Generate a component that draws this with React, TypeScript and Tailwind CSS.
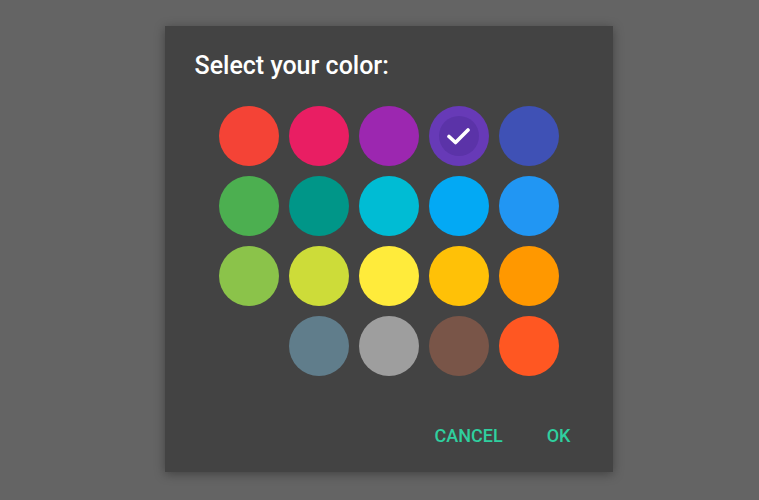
const swatches: (string | null)[] = [
  '#f44336', '#e91e63', '#9c27b0', '#673ab7', '#3f51b5',
  '#4caf50', '#009688', '#00bcd4', '#03a9f4', '#2196f3',
  '#8bc34a', '#cddc39', '#ffeb3b', '#ffc107', '#ff9800',
  null, '#607d8b', '#9e9e9e', '#795548', '#ff5722',
]

const selected = '#673ab7'

function Swatch({ color }: { color: string | null }) {
  if (!color) return <div className="h-[60px] w-[60px]" />
  const isSelected = color === selected
  return (
    <button
      type="button"
      className="flex h-[60px] w-[60px] items-center justify-center rounded-full"
      style={{ backgroundColor: color }}
    >
      {isSelected && (
        <span className="flex h-[40px] w-[40px] items-center justify-center rounded-full bg-[#5b33a8]">
          <svg width="24" height="24" viewBox="0 0 24 24" fill="none">
            <polyline
              points="2,12.5 8.5,18.5 21,6"
              stroke="white"
              strokeWidth="3.6"
              strokeLinecap="round"
              strokeLinejoin="round"
            />
          </svg>
        </span>
      )}
    </button>
  )
}

export default function App() {
  return (
    <div className="flex h-[500px] w-[759px] items-start justify-center bg-[#646464] pt-[26px] font-['Roboto',sans-serif]">
      <div className="ml-[18px] flex h-[446px] w-[448px] flex-col bg-[#434343] shadow-[0_2px_10px_rgba(0,0,0,0.35)]">
        <h2 className="pl-[30px] pt-[25px] text-[25px] font-medium leading-[30px] text-white">
          Select your color:
        </h2>
        <div className="mx-auto mt-[25px] grid grid-cols-5 gap-[10px]">
          {swatches.map((c, i) => (
            <Swatch key={i} color={c} />
          ))}
        </div>
        <div className="mt-[50px] flex justify-end gap-[44px] pr-[42px]">
          <button type="button" className="text-[18px] font-medium leading-[20px] text-[#2fcf9f]">
            CANCEL
          </button>
          <button type="button" className="text-[18px] font-medium leading-[20px] text-[#2fcf9f]">
            OK
          </button>
        </div>
      </div>
    </div>
  )
}
